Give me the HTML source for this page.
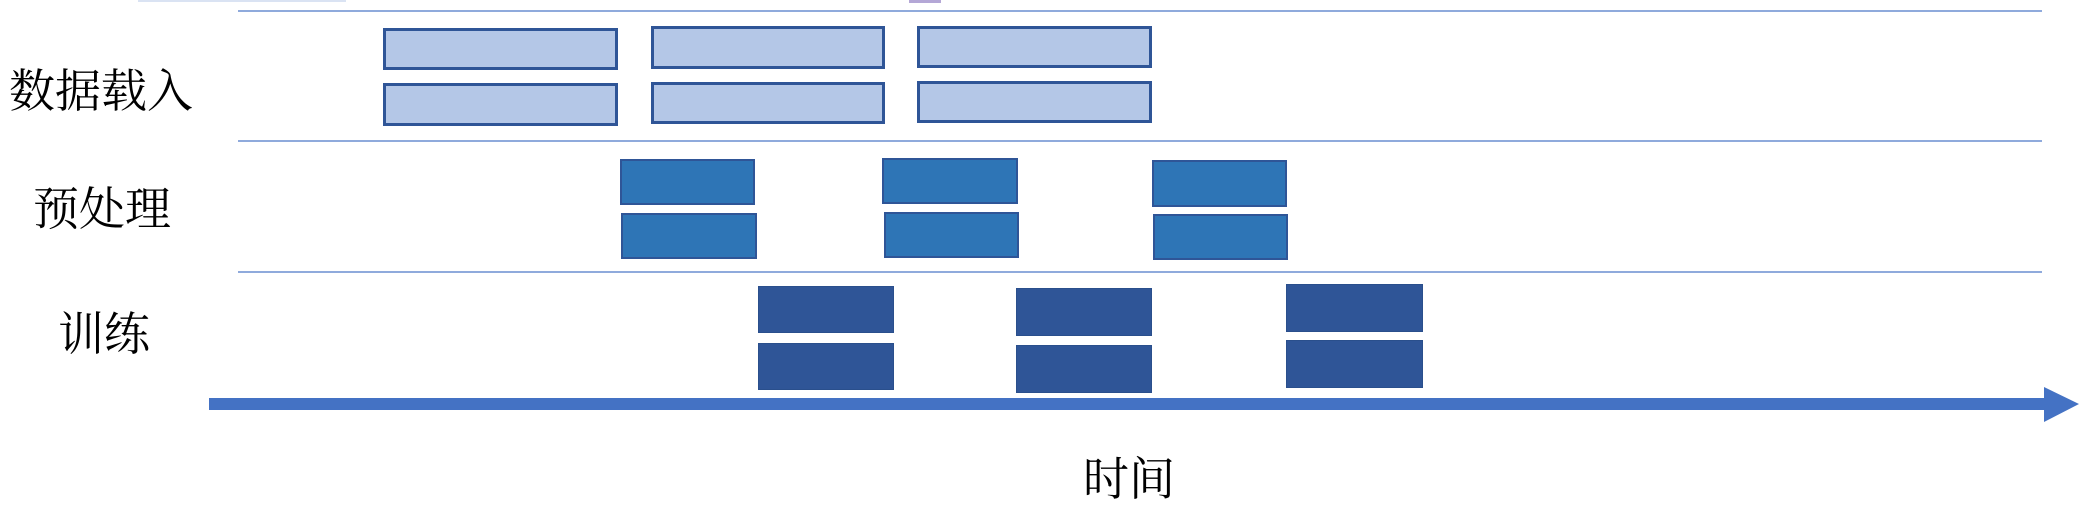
<!DOCTYPE html>
<html><head><meta charset="utf-8"><style>
body{margin:0;width:2082px;height:520px;background:#fff;position:relative;overflow:hidden;font-family:"Liberation Serif","Noto Serif CJK SC",serif;}
.a{position:absolute;box-sizing:border-box}
.l{background:#b4c7e7;border:3px solid #2f5597}
.m{background:#2e75b6;border:2px solid #2f5597}
.d{background:#2f5597;border:1px solid #2a4f8c}
.h{position:absolute;height:2px;background:#8faadc;left:238px;width:1804px}
.t{position:absolute;font-size:46px;line-height:46px;color:#000;white-space:nowrap}
</style></head><body>
<div class="a" style="left:138px;top:0;width:208px;height:2px;background:#dae3f3"></div>
<div class="a" style="left:909px;top:0;width:32px;height:3px;background:#b4a7d6"></div>
<div class="h" style="top:10px"></div>
<div class="h" style="top:140px"></div>
<div class="h" style="top:271px"></div>

<div class="a l" style="left:383px;top:28px;width:235px;height:42px"></div>
<div class="a l" style="left:383px;top:83px;width:235px;height:43px"></div>
<div class="a l" style="left:651px;top:26px;width:234px;height:43px"></div>
<div class="a l" style="left:651px;top:82px;width:234px;height:42px"></div>
<div class="a l" style="left:917px;top:26px;width:235px;height:42px"></div>
<div class="a l" style="left:917px;top:81px;width:235px;height:42px"></div>

<div class="a m" style="left:620px;top:159px;width:135px;height:46px"></div>
<div class="a m" style="left:621px;top:213px;width:136px;height:46px"></div>
<div class="a m" style="left:882px;top:158px;width:136px;height:46px"></div>
<div class="a m" style="left:884px;top:212px;width:135px;height:46px"></div>
<div class="a m" style="left:1152px;top:160px;width:135px;height:47px"></div>
<div class="a m" style="left:1153px;top:214px;width:135px;height:46px"></div>

<div class="a d" style="left:758px;top:286px;width:136px;height:47px"></div>
<div class="a d" style="left:758px;top:343px;width:136px;height:47px"></div>
<div class="a d" style="left:1016px;top:288px;width:136px;height:48px"></div>
<div class="a d" style="left:1016px;top:345px;width:136px;height:48px"></div>
<div class="a d" style="left:1286px;top:284px;width:137px;height:48px"></div>
<div class="a d" style="left:1286px;top:340px;width:137px;height:48px"></div>

<svg class="a" style="left:0;top:0" width="2082" height="520">
<rect x="209" y="398" width="1837" height="12" fill="#4472c4"/>
<polygon points="2044,387 2079,404 2044,422" fill="#4472c4"/>
</svg>

<div class="t" style="left:9px;top:69px;letter-spacing:0px">数据载入</div>
<div class="t" style="left:33px;top:187px">预处理</div>
<div class="t" style="left:58px;top:312px">训练</div>
<div class="t" style="left:1083px;top:457px">时间</div>
</body></html>
